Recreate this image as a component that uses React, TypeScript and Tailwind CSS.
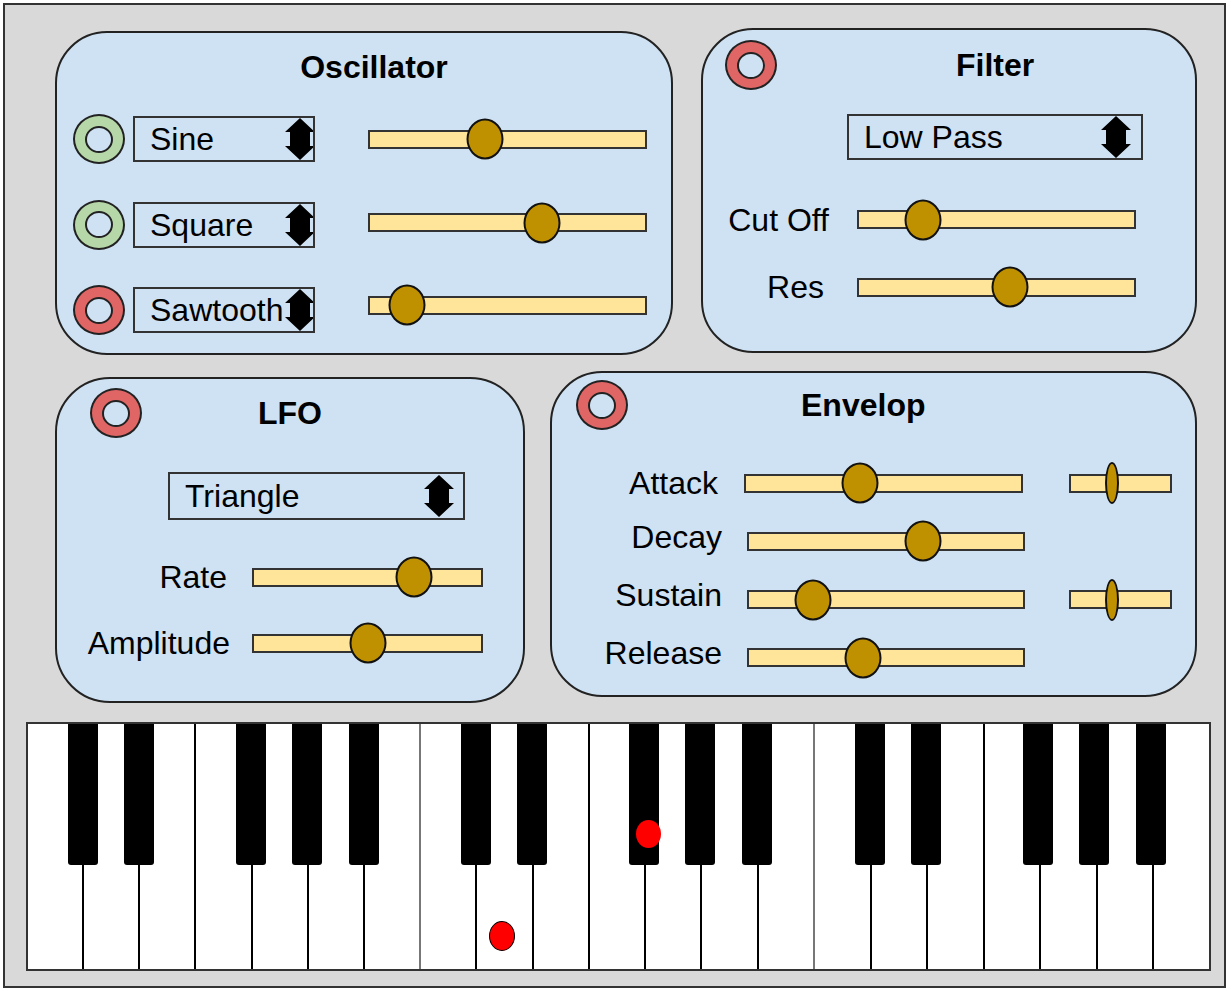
import React from "react";

function Ring({ on }: { on: boolean }) {
  return (
    <div
      className={`flex h-[50px] w-[52px] shrink-0 items-center justify-center rounded-[50%] border-2 border-[#222] ${
        on ? "bg-[#b6d7a8]" : "bg-[#e06666]"
      }`}
    >
      <div className="h-[27px] w-[28px] rounded-[50%] border-2 border-[#222] bg-[#cfe2f3]" />
    </div>
  );
}

function Arrows({ className = "" }: { className?: string }) {
  return (
    <svg width="30" height="42" viewBox="0 0 30 42" className={`shrink-0 ${className}`}>
      <polygon points="15,0 30,14 25,14 25,28 30,28 15,42 0,28 5,28 5,14 0,14" fill="#000" />
    </svg>
  );
}

function Select({ label, className, arrow }: { label: string; className: string; arrow?: string }) {
  return (
    <div
      className={`flex shrink-0 items-center justify-between overflow-hidden border-2 border-[#333] pl-[15px] text-[32px] leading-none ${className}`}
    >
      <span className="whitespace-nowrap">{label}</span>
      <Arrows className={arrow} />
    </div>
  );
}

function Slider({ w, v, thin }: { w: string; v: number; thin?: boolean }) {
  return (
    <div className={`relative h-[19px] shrink-0 border-2 border-[#333] bg-[#ffe599] ${w}`}>
      <div
        className={`absolute top-1/2 -translate-x-1/2 -translate-y-1/2 rounded-[50%] border-2 border-[#111] bg-[#bf9000] ${
          thin ? "h-[42px] w-[14px]" : "h-[41px] w-[37px]"
        }`}
        style={{ left: `${v * 100}%` }}
      />
    </div>
  );
}

const oscRows = [
  { on: true, label: "Sine", v: 0.418, s: "ml-[53px] w-[279px]" },
  { on: true, label: "Square", v: 0.625, s: "ml-[53px] mb-[4px] w-[279px]" },
  { on: false, label: "Sawtooth", v: 0.135, s: "ml-[53px] mb-[10px] w-[279px]" },
];

function Oscillator() {
  return (
    <div className="ml-[50px] mt-[3px] h-[324px] w-[618px] shrink-0 rounded-[52px] border-2 border-[#222] bg-[#cfe2f3] pt-[18px]">
      <h2 className="pl-[20px] text-center text-[32px] font-bold leading-none">Oscillator</h2>
      <div className="mt-[31px] flex flex-col gap-[35.5px] pl-[16px]">
        {oscRows.map((r) => (
          <div key={r.label} className="flex h-[50px] items-center">
            <Ring on={r.on} />
            <Select label={r.label} className="ml-[8px] h-[46px] w-[182px] pr-0" arrow="-mr-[2px]" />
            <Slider w={r.s} v={r.v} />
          </div>
        ))}
      </div>
    </div>
  );
}

function Filter() {
  return (
    <div className="ml-[28px] h-[325px] w-[496px] shrink-0 rounded-[52px] border-2 border-[#222] bg-[#cfe2f3] pt-[10px]">
      <div className="flex items-center pl-[22px]">
        <Ring on={false} />
        <h2 className="ml-[179px] text-[32px] font-bold leading-none">Filter</h2>
      </div>
      <Select label="Low Pass" className="ml-[144px] mt-[24px] h-[46px] w-[296px] pr-[10px]" />
      <div className="mt-[39px] flex h-[41px] items-center">
        <span className="w-[126px] text-right text-[32px] leading-none">Cut Off</span>
        <Slider w="ml-[28px] w-[279px]" v={0.233} />
      </div>
      <div className="mt-[26.5px] flex h-[41px] items-center">
        <span className="w-[126px] pr-[5px] text-right text-[32px] leading-none">Res</span>
        <Slider w="ml-[28px] w-[279px]" v={0.549} />
      </div>
    </div>
  );
}

function LFO() {
  return (
    <div className="ml-[50px] mt-[6px] h-[326px] w-[470px] shrink-0 rounded-[55px] border-2 border-[#222] bg-[#cfe2f3] pt-[9px]">
      <div className="flex items-center pl-[33px]">
        <Ring on={false} />
        <h2 className="ml-[116px] text-[32px] font-bold leading-none">LFO</h2>
      </div>
      <Select label="Triangle" className="ml-[111px] mt-[34px] h-[48px] w-[297px] pr-[9px]" />
      <div className="mt-[36.5px] flex h-[41px] items-center">
        <span className="w-[171px] pr-[1px] text-right text-[32px] leading-none">Rate</span>
        <Slider w="ml-[24px] w-[231px]" v={0.705} />
      </div>
      <div className="mt-[25px] flex h-[41px] items-center">
        <span className="w-[173px] text-right text-[32px] leading-none">Amplitude</span>
        <Slider w="ml-[22px] w-[231px]" v={0.502} />
      </div>
    </div>
  );
}

const envRows = [
  { label: "Attack", v: 0.415, small: true },
  { label: "Decay", v: 0.635, small: false },
  { label: "Sustain", v: 0.234, small: true },
  { label: "Release", v: 0.416, small: false },
];

function Envelop() {
  return (
    <div className="ml-[25px] h-[326px] w-[647px] shrink-0 rounded-[52px] border-2 border-[#222] bg-[#cfe2f3] pt-[7px]">
      <div className="flex items-center pl-[24px]">
        <Ring on={false} />
        <h2 className="ml-[173px] text-[32px] font-bold leading-none">Envelop</h2>
      </div>
      <div className="mt-[32.5px] flex flex-col gap-[17.3px]">
        {envRows.map((r, i) => (
          <div key={r.label} className="flex h-[41px] items-center">
            <span
              className={`w-[170px] text-right text-[32px] leading-none ${
                i === 0 ? "pr-[4px]" : "mb-[9px]"
              }`}
            >
              {r.label}
            </span>
            <Slider w={i === 0 ? "ml-[22px] w-[279px]" : "ml-[25px] w-[278px]"} v={r.v} />
            {r.small && (
              <Slider w={i === 0 ? "ml-[46px] w-[103px]" : "ml-[44px] w-[103px]"} v={0.414} thin />
            )}
          </div>
        ))}
      </div>
    </div>
  );
}

const blackOffsets = ["left-[40px]", "left-[96px]", "left-[208px]", "left-[264px]", "left-[321px]"];

function Octave({ className }: { className: string }) {
  return (
    <div className={`relative flex h-full ${className}`}>
      {[0, 1, 2, 3, 4, 5, 6].map((k) => (
        <div key={k} className={`h-full flex-1 bg-white ${k < 6 ? "border-r-2 border-black" : ""}`} />
      ))}
      {blackOffsets.map((c) => (
        <div key={c} className={`absolute top-0 h-[141px] w-[30px] rounded-b-[3px] bg-black ${c}`} />
      ))}
    </div>
  );
}

function Piano() {
  return (
    <div className="relative ml-[21px] mt-[19px] flex h-[249px] w-[1185px] border-2 border-[#333] bg-white">
      <Octave className="w-[391px]" />
      <Octave className="w-[396px] border-x-2 border-[#777]" />
      <Octave className="flex-1" />
      <div className="absolute left-[461px] top-[197px] h-[30px] w-[26px] rounded-[50%] border-[1.5px] border-black bg-[#ff0000]" />
      <div className="absolute left-[608px] top-[96px] h-[28px] w-[25px] rounded-[50%] bg-[#ff0000]" />
    </div>
  );
}

export default function App() {
  return (
    <div className="h-[992px] w-[1230px] bg-white p-[3px] font-['Liberation_Sans',Arial,sans-serif] text-black">
      <div className="h-[985px] w-[1223px] border-2 border-[#333] bg-[#d9d9d9] pt-[23px]">
        <div className="flex items-start">
          <Oscillator />
          <Filter />
        </div>
        <div className="mt-[16px] flex items-start">
          <LFO />
          <Envelop />
        </div>
        <Piano />
      </div>
    </div>
  );
}
